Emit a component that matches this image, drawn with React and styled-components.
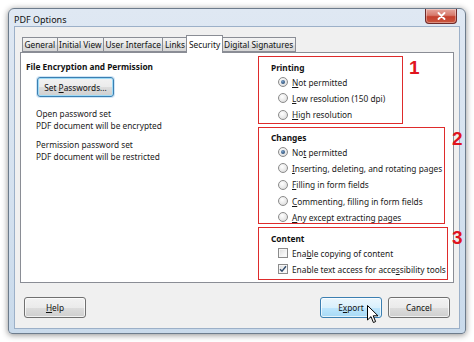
import React from "react";
import styled, { createGlobalStyle } from "styled-components";

const Global = createGlobalStyle`
  html, body { margin: 0; padding: 0; background: #ffffff; }
  body { font-family: "Noto Sans", "Open Sans", sans-serif; font-size: 8.3px; color: #1a1a1a; }
  * { box-sizing: border-box; }
`;

const Page = styled.div`
  width: 474px;
  height: 342px;
  padding: 8px 8px 0 8px;
  background: #fff;
`;

const Window = styled.div`
  position: relative;
  width: 458px;
  height: 326px;
  border: 1px solid #6d7c8c;
  border-radius: 6px 6px 4px 4px;
  background: linear-gradient(180deg, #dfe8f3 0%, #d4e1ef 60%, #c9daeb 100%);
  box-shadow: 0 1px 6px rgba(0, 0, 0, 0.45);
  display: flex;
  flex-direction: column;
  padding: 0 5px 4px 5px;
`;

const TitleBar = styled.div`
  height: 19px;
  display: flex;
  align-items: flex-start;
  justify-content: space-between;
`;

const Title = styled.div`
  font-size: 9px;
  padding: 4px 0 0 0;
  color: #111;
`;

const CloseBtn = styled.div`
  width: 32px;
  height: 15px;
  margin: 0 3px 0 0;
  border: 1px solid #6e2a2a;
  border-top: none;
  border-radius: 0 0 4px 4px;
  background: linear-gradient(180deg, #e6a79e 0%, #d77a6c 45%, #c5402e 55%, #c9573f 100%);
  display: flex;
  align-items: center;
  justify-content: center;
  box-shadow: inset 0 0 0 1px rgba(255, 255, 255, 0.35);
`;

const Client = styled.div`
  flex: 1;
  background: #f0f0f0;
  border: 1px solid #9cb0c8;
  display: flex;
  flex-direction: column;
  padding: 8px 5px 10px 5px;
`;

const TabRow = styled.div`
  display: flex;
  align-items: flex-end;
  height: 17px;
  padding-left: 3px;
  position: relative;
  z-index: 2;
`;

const Tab = styled.div`
  height: ${(p) => (p.$active ? "18px" : "15px")};
  margin-bottom: ${(p) => (p.$active ? "-1px" : "0")};
  padding: 0 1.5px;
  display: flex;
  align-items: center;
  border: 1px solid #8a8d95;
  border-bottom: ${(p) => (p.$active ? "none" : "1px solid #8a8d95")};
  margin-left: -1px;
  background: ${(p) =>
    p.$active ? "#ffffff" : "linear-gradient(180deg, #f4f4f4 0%, #e9e9e9 50%, #dedede 51%, #d6d6d6 100%)"};
  color: #111;
  white-space: nowrap;
`;

const Panel = styled.div`
  height: 231px;
  background: #fff;
  border: 1px solid #8a8d95;
  display: grid;
  grid-template-columns: 232px 1fr;
  padding: 3px 0 0 5px;
`;

const LeftCol = styled.div`
  display: flex;
  flex-direction: column;
  padding-top: 5px;
`;

const SectionTitle = styled.div`
  font-weight: 700;
  color: #111;
  line-height: 11px;
`;

const PushButton = styled.div`
  width: ${(p) => p.$w || 62}px;
  height: ${(p) => p.$h || 21}px;
  border: 1px solid ${(p) => (p.$hover || p.$focus ? "#3c7fb1" : "#707070")};
  border-radius: 3px;
  background: ${(p) =>
    p.$hover
      ? "linear-gradient(180deg, #eaf6fd 0%, #d9f0fc 50%, #bee6fd 51%, #a7d9f5 100%)"
      : "linear-gradient(180deg, #f2f2f2 0%, #ebebeb 50%, #dddddd 51%, #cfcfcf 100%)"};
  box-shadow: ${(p) =>
    p.$focus ? "inset 0 0 0 1px #9edbf7, 0 0 0 1px rgba(120,180,230,0.35)" : "inset 0 0 0 1px rgba(255,255,255,0.7)"};
  display: flex;
  align-items: center;
  justify-content: center;
  color: #111;
  position: relative;
`;

const SetPwButton = styled(PushButton)`
  margin: 5px 0 0 11px;
`;

const InfoBlock = styled.div`
  margin: ${(p) => p.$mt}px 0 0 10px;
  line-height: 12px;
  color: #222;
`;

const RightCol = styled.div`
  display: flex;
  flex-direction: column;
  gap: 3px;
`;

const Group = styled.div`
  position: relative;
  width: ${(p) => p.$w}px;
  height: ${(p) => p.$h}px;
  border: 1.6px solid #de2b2b;
  padding: ${(p) => p.$pt || 5}px 0 0 12px;
`;

const Options = styled.div`
  display: flex;
  flex-direction: column;
  padding-left: 7px;
  margin-top: 1px;
`;

const OptionRow = styled.div`
  height: 16.3px;
  flex: none;
  display: flex;
  align-items: center;
  gap: 4px;
  color: #1a1a1a;
  white-space: nowrap;
`;

const Radio = styled.span`
  width: 10px;
  height: 10px;
  border-radius: 50%;
  border: 1px solid #8b8b8b;
  background: radial-gradient(circle at 40% 35%, #ffffff 0%, #e6e6e6 60%, #cfcfcf 100%);
  display: flex;
  align-items: center;
  justify-content: center;
  flex: none;
  &::after {
    content: "";
    width: 4px;
    height: 4px;
    border-radius: 50%;
    background: ${(p) => (p.$checked ? "radial-gradient(circle at 40% 35%, #7aa0c8 0%, #1d3f66 90%)" : "transparent")};
  }
`;

const Check = styled.span`
  width: 10px;
  height: 10px;
  border: 1px solid #8b8b8b;
  background: linear-gradient(135deg, #dcdcdc 0%, #f4f4f4 60%, #ffffff 100%);
  box-shadow: inset 0 0 0 1px #f6f6f6;
  display: flex;
  align-items: center;
  justify-content: center;
  flex: none;
`;

const Marker = styled.div`
  position: absolute;
  top: ${(p) => p.$top}px;
  left: ${(p) => p.$left}px;
  color: #e0141e;
  font-family: "Liberation Sans", Arial, sans-serif;
  font-weight: 700;
  font-size: 19px;
  line-height: 19px;
`;

const ButtonBar = styled.div`
  display: flex;
  align-items: center;
  margin-top: 14px;
  padding: 0 4px;
  gap: 6px;
`;

const Spacer = styled.div`
  flex: 1;
`;

const Cursor = styled.svg`
  position: absolute;
  left: 46px;
  top: 7px;
`;

const Opt = ({ kind, checked, children }) => (
  <OptionRow>
    {kind === "radio" ? (
      <Radio $checked={checked} />
    ) : (
      <Check>
        {checked && (
          <svg width="8" height="8" viewBox="0 0 8 8">
            <path d="M1 4.2 L3 6.3 L7 1.3" fill="none" stroke="#2f4a6b" strokeWidth="1.4" />
          </svg>
        )}
      </Check>
    )}
    <span>{children}</span>
  </OptionRow>
);

export default function App() {
  return (
    <Page>
      <Global />
      <Window>
        <TitleBar>
          <Title>PDF Options</Title>
          <CloseBtn>
            <svg width="9" height="8" viewBox="0 0 9 8">
              <path d="M1.5 1 L7.5 7 M7.5 1 L1.5 7" stroke="#fff" strokeWidth="1.8" strokeLinecap="round" />
            </svg>
          </CloseBtn>
        </TitleBar>
        <Client>
          <TabRow>
            <Tab>General</Tab>
            <Tab>Initial View</Tab>
            <Tab>User Interface</Tab>
            <Tab>Links</Tab>
            <Tab $active>Security</Tab>
            <Tab>Digital Signatures</Tab>
          </TabRow>
          <Panel>
            <LeftCol>
              <SectionTitle>File Encryption and Permission</SectionTitle>
              <SetPwButton $w={77} $h={20} $focus>
                <span>
                  Set <u>P</u>asswords...
                </span>
              </SetPwButton>
              <InfoBlock $mt={11}>
                Open password set
                <br />
                PDF document will be encrypted
              </InfoBlock>
              <InfoBlock $mt={7}>
                Permission password set
                <br />
                PDF document will be restricted
              </InfoBlock>
            </LeftCol>
            <RightCol>
              <Group $w={145} $h={68}>
                <SectionTitle>Printing</SectionTitle>
                <Options>
                  <Opt kind="radio" checked>
                    <u>N</u>ot permitted
                  </Opt>
                  <Opt kind="radio">
                    <u>L</u>ow resolution (150 dpi)
                  </Opt>
                  <Opt kind="radio">
                    <u>H</u>igh resolution
                  </Opt>
                </Options>
                <Marker $top={1} $left={150}>1</Marker>
              </Group>
              <Group $w={187} $h={97} $pt={4}>
                <SectionTitle>Changes</SectionTitle>
                <Options>
                  <Opt kind="radio" checked>
                    No<u>t</u> permitted
                  </Opt>
                  <Opt kind="radio">
                    <u>I</u>nserting, deleting, and rotating pages
                  </Opt>
                  <Opt kind="radio">
                    <u>F</u>illing in form fields
                  </Opt>
                  <Opt kind="radio">
                    <u>C</u>ommenting, filling in form fields
                  </Opt>
                  <Opt kind="radio">
                    <u>A</u>ny except extracting pages
                  </Opt>
                </Options>
                <Marker $top={1} $left={193}>2</Marker>
              </Group>
              <Group $w={190} $h={53}>
                <SectionTitle>Content</SectionTitle>
                <Options>
                  <Opt kind="check">
                    Ena<u>b</u>le copying of content
                  </Opt>
                  <Opt kind="check" checked>
                    Enable text access for acce<u>s</u>sibility tools
                  </Opt>
                </Options>
                <Marker $top={0} $left={193}>3</Marker>
              </Group>
            </RightCol>
          </Panel>
          <ButtonBar>
            <PushButton>
              <span>
                <u>H</u>elp
              </span>
            </PushButton>
            <Spacer />
            <PushButton $hover>
              <span>
                E<u>x</u>port
              </span>
              <Cursor width="12" height="19" viewBox="0 0 12 19">
                <path
                  d="M0.5 0.5 L0.5 15 L4 11.6 L6.4 17.5 L8.6 16.6 L6.2 10.8 L11 10.8 Z"
                  fill="#fff"
                  stroke="#000"
                  strokeWidth="1"
                  strokeLinejoin="round"
                />
              </Cursor>
            </PushButton>
            <PushButton>
              <span>Cancel</span>
            </PushButton>
          </ButtonBar>
        </Client>
      </Window>
    </Page>
  );
}
